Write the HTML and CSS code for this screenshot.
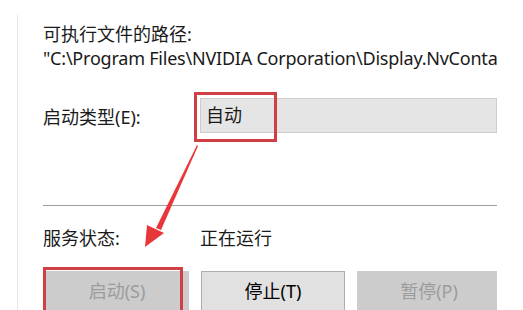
FILE: index.html
```html
<!DOCTYPE html>
<html lang="zh-CN">
<head>
    <meta charset="UTF-8">
    <title>服务属性</title>
    <link rel="stylesheet" href="styles.css">
</head>
<body>
    <div class="panel">
        <div class="content">
            <div class="field-label">可执行文件的路径:</div>
            <div class="path">"C:\Program Files\NVIDIA Corporation\Display.NvConta</div>

            <div class="row startup">
                <span class="label">启动类型(E):</span>
                <div class="combo">自动</div>
            </div>

            <hr class="divider">

            <div class="row status">
                <span class="label">服务状态:</span>
                <span class="value">正在运行</span>
            </div>

            <div class="buttons">
                <button class="btn" disabled>启动(S)</button>
                <button class="btn">停止(T)</button>
                <button class="btn" disabled>暂停(P)</button>
            </div>
        </div>

        <!-- annotations drawn over the dialog -->
        <div class="mark mark-combo"></div>
        <div class="mark mark-start"></div>
        <svg class="arrow" width="70" height="110" viewBox="0 0 70 110">
            <path d="M66 2 L67 3 L30 87 L25 85 Z" fill="#e8373a"/>
            <polygon points="14,104 16,82 33,90" fill="#e8373a"/>
        </svg>
    </div>
</body>
</html>
```

FILE: styles.css
```css
body {
    margin: 0;
    background: #fff;
    font-family: "Noto Sans", "Noto Sans CJK SC", sans-serif;
    font-size: 18px;
    color: #1a1a1a;
    width: 523px;
    height: 310px;
    overflow: hidden;
}
.panel {
    position: relative;
    margin: 15px 0 0 17px;
    height: 295px;
    border-left: 1px solid #e6e6e6;
    padding-left: 25px;
}
.content {
    width: 454px;
    overflow: hidden;
    padding-top: 7px;
}
.field-label {
    line-height: 24px;
}
.path {
    white-space: nowrap;
    line-height: 24px;
    letter-spacing: -0.22px;
}
.row {
    display: flex;
    align-items: center;
}
.label {
    width: 157px;
    flex-shrink: 0;
}
.startup {
    margin-top: 28px;
}
.combo {
    flex: 1;
    height: 33px;
    line-height: 33px;
    padding-left: 5px;
    background: #e5e5e5;
    border: 1px solid #cdcdcd;
}
.divider {
    margin: 72px 0 0;
    border: none;
    border-top: 1px solid #a0a0a0;
}
.status {
    margin-top: 16px;
    height: 30px;
}
.buttons {
    display: flex;
    gap: 12px;
    margin-top: 19px;
    padding-left: 2px;
}
.btn {
    flex-shrink: 0;
    width: 144px;
    height: 44px;
    font: inherit;
    color: #000;
    background: #e1e1e1;
    border: 1px solid #adadad;
    padding: 0 0 6px;
}
.btn:disabled {
    color: #9c9c9c;
    background: #cccccc;
    border-color: #cccccc;
}
.mark {
    position: absolute;
    border: 3px solid #cf3f43;
}
.mark-combo {
    left: 176px;
    top: 77px;
    width: 77px;
    height: 44px;
}
.mark-start {
    left: 25px;
    top: 252px;
    width: 134px;
    height: 50px;
}
.arrow {
    position: absolute;
    left: 113px;
    top: 128px;
}
```
